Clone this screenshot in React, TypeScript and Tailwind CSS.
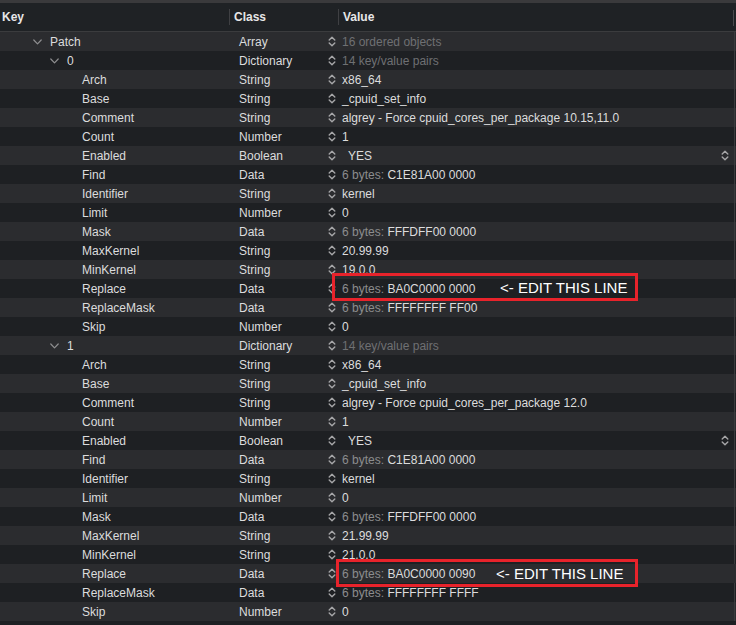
import React from 'react';

type Row = {
  k: string;
  level: number;
  cls: string;
  pre?: string;
  val: string;
  dim?: boolean;
  bool?: boolean;
  mark?: 'a' | 'b';
};

const patch = (
  comment: string,
  maxK: string,
  minK: string,
  rep: string,
  repMask: string,
  mark: 'a' | 'b'
): Row[] => [
  { k: 'Arch', level: 2, cls: 'String', val: 'x86_64' },
  { k: 'Base', level: 2, cls: 'String', val: '_cpuid_set_info' },
  { k: 'Comment', level: 2, cls: 'String', val: comment },
  { k: 'Count', level: 2, cls: 'Number', val: '1' },
  { k: 'Enabled', level: 2, cls: 'Boolean', val: 'YES', bool: true },
  { k: 'Find', level: 2, cls: 'Data', pre: '6 bytes:', val: 'C1E81A00 0000' },
  { k: 'Identifier', level: 2, cls: 'String', val: 'kernel' },
  { k: 'Limit', level: 2, cls: 'Number', val: '0' },
  { k: 'Mask', level: 2, cls: 'Data', pre: '6 bytes:', val: 'FFFDFF00 0000' },
  { k: 'MaxKernel', level: 2, cls: 'String', val: maxK },
  { k: 'MinKernel', level: 2, cls: 'String', val: minK },
  { k: 'Replace', level: 2, cls: 'Data', pre: '6 bytes:', val: rep, mark },
  { k: 'ReplaceMask', level: 2, cls: 'Data', pre: '6 bytes:', val: repMask },
  { k: 'Skip', level: 2, cls: 'Number', val: '0' },
];

const rows: Row[] = [
  { k: 'Patch', level: 0, cls: 'Array', val: '16 ordered objects', dim: true },
  { k: '0', level: 1, cls: 'Dictionary', val: '14 key/value pairs', dim: true },
  ...patch('algrey - Force cpuid_cores_per_package 10.15,11.0', '20.99.99', '19.0.0', 'BA0C0000 0000', 'FFFFFFFF FF00', 'a'),
  { k: '1', level: 1, cls: 'Dictionary', val: '14 key/value pairs', dim: true },
  ...patch('algrey - Force cpuid_cores_per_package 12.0', '21.99.99', '21.0.0', 'BA0C0000 0090', 'FFFFFFFF FFFF', 'b'),
];

const UpDown = () => (
  <svg width="8" height="11" viewBox="0 0 8 11" fill="none" stroke="#a6a6a8" strokeWidth="1.4" strokeLinecap="round" strokeLinejoin="round">
    <path d="M1.2 4 L4 1.2 L6.8 4" />
    <path d="M1.2 7 L4 9.8 L6.8 7" />
  </svg>
);

const Chevron = () => (
  <svg width="9" height="6" viewBox="0 0 9 6" fill="none" stroke="#8e8e90" strokeWidth="1.2" strokeLinecap="round" strokeLinejoin="round">
    <path d="M0.8 1 L4.5 4.8 L8.2 1" />
  </svg>
);

export default function App() {
  return (
    <div className="w-[736px] h-[625px] overflow-hidden bg-[#1e2023] text-[12px] text-[#dcdcdd]" style={{ fontFamily: '"Liberation Sans", Arial, sans-serif' }}>
      <div className="h-[3px] bg-[#3a3a3c]" />
      <div className="relative flex h-[29px] items-center bg-[#1f2225] border-b border-[#3b3c3e] font-semibold text-[#e6e6e7]">
        <div className="w-[229px] pl-[2px]">Key</div>
        <div className="w-[109px] flex items-center">
          <div className="w-px h-[16px] bg-[#3f4043]" />
          <span className="pl-[4px]">Class</span>
        </div>
        <div className="flex-1 flex items-center">
          <div className="w-px h-[16px] bg-[#3f4043]" />
          <span className="pl-[4px]">Value</span>
        </div>
        <div className="absolute right-[2px] top-[7px] w-px h-[16px] bg-[#4a4b4e]" />
      </div>
      <div className="relative">
        {rows.map((r, i) => (
          <div key={i} className={`relative flex h-[19px] items-center ${r.mark ? 'z-10' : ''} ${i % 2 === 0 ? 'bg-[#2b2c2f]' : 'bg-[#1e2023]'}`}>
            <div className="w-[229px] flex items-center">
              {r.level === 0 && (
                <>
                  <div className="w-[33px]" />
                  <Chevron />
                  <span className="pl-[8px]">{r.k}</span>
                </>
              )}
              {r.level === 1 && (
                <>
                  <div className="w-[50px]" />
                  <Chevron />
                  <span className="pl-[8px]">{r.k}</span>
                </>
              )}
              {r.level === 2 && <span className="pl-[82px]">{r.k}</span>}
            </div>
            <div className="w-[109px] flex items-center pl-[10px] pr-[2px]">
              <span className="flex-1">{r.cls}</span>
              <UpDown />
            </div>
            <div className="flex-1 flex items-center pl-[4px]">
              {r.bool ? (
                <>
                  <span className="flex-1 pl-[6px]">{r.val}</span>
                  <span className="pr-[7px] flex"><UpDown /></span>
                </>
              ) : r.pre ? (
                <span>
                  <span className="text-[#8c8c8e]">{r.pre}</span> {r.val}
                </span>
              ) : (
                <span className={r.dim ? 'text-[#6f7073]' : ''}>{r.val}</span>
              )}
            </div>
            {r.mark === 'a' && (
              <div className="absolute z-10 left-[332px] top-[-6px] w-[306px] h-[28px] border-[3px] border-[#e8232b] flex items-center">
                <span className="pl-[165px] text-[15px] leading-none text-white">&lt;- EDIT THIS LINE</span>
              </div>
            )}
            {r.mark === 'b' && (
              <div className="absolute z-10 left-[336px] top-[-5px] w-[302px] h-[28px] border-[3px] border-[#e8232b] flex items-center">
                <span className="pl-[157px] text-[15px] leading-none text-white">&lt;- EDIT THIS LINE</span>
              </div>
            )}
          </div>
        ))}
        <div className="absolute right-[1px] top-0 bottom-0 w-px bg-[#3a3b3d]" />
      </div>
    </div>
  );
}
